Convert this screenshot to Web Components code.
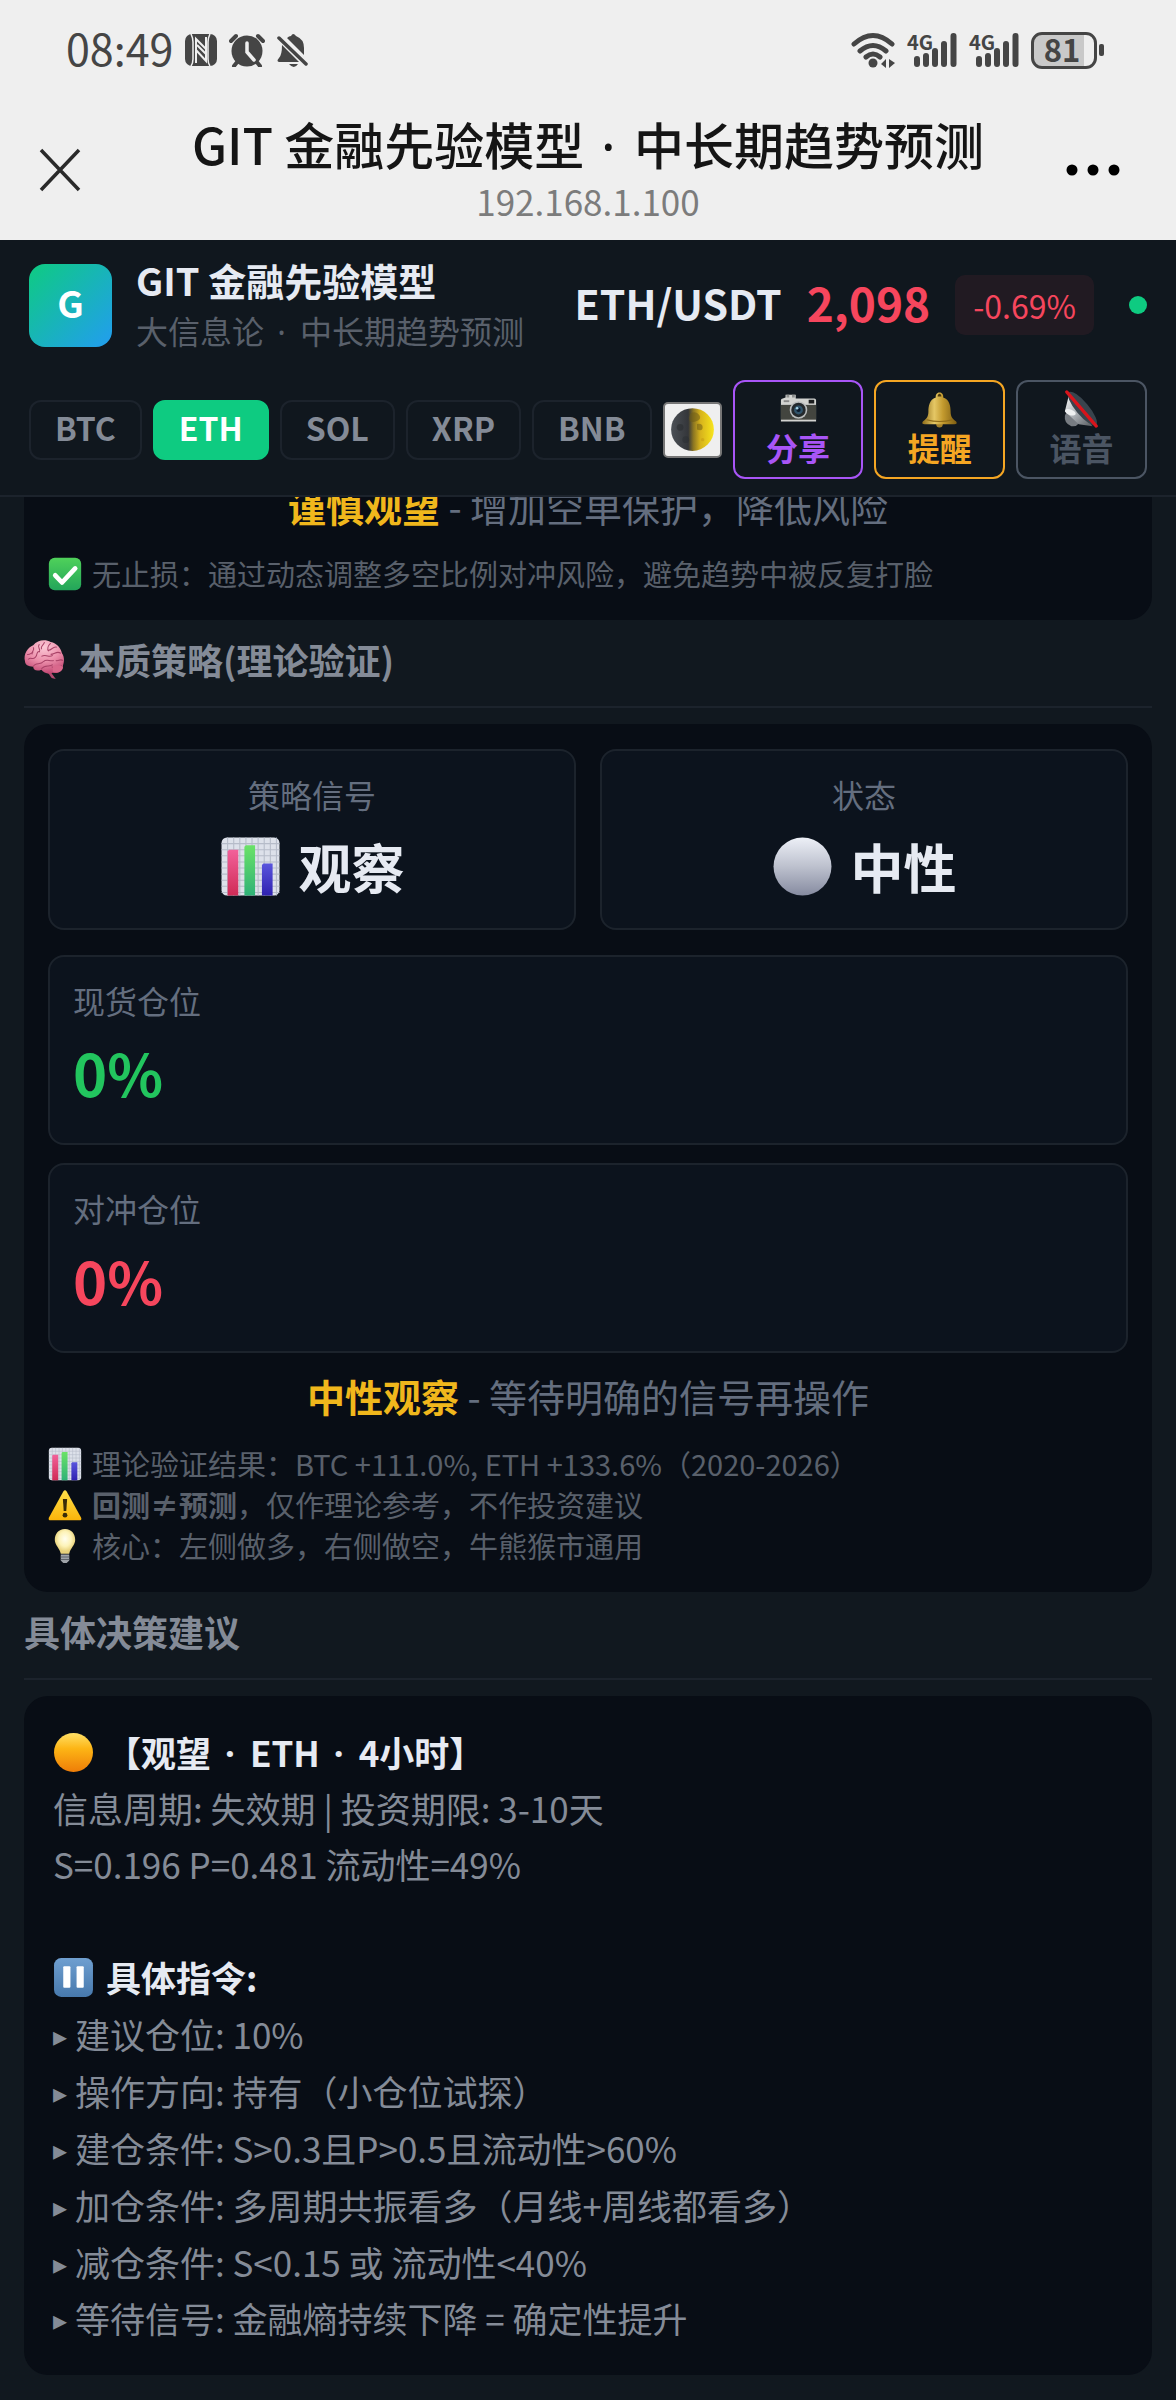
<!DOCTYPE html>
<html lang="zh-CN">
<head>
<meta charset="utf-8">
<meta name="viewport" content="width=device-width, initial-scale=1">
<title>GIT 金融先验模型 · 中长期趋势预测</title>
<style>
  :root {
    --panel: #11181f;
    --card: #080d15;
    --tile: #0c131d;
    --line: #1c232c;
    --text: #e6eaf2;
    --muted: #848b97;
    --dim: #59606b;
    --slate: #646e7f;
    --green: #0ecb81;
    --red: #f6465d;
    --gold: #f0b71c;
  }
  body {
    margin: 0;
    background: var(--panel);
    color: var(--text);
    font-family: "Noto Sans CJK SC", "Noto Sans", sans-serif;
  }
  main {
    display: block;
    overflow: hidden;
    padding: 0 24px 24px;
  }
  .previous {
    margin-top: -41px;
  }
</style>
</head>
<body>
  <status-bar time="08:49" battery="81"></status-bar>
  <browser-bar>
    GIT 金融先验模型 <mid-dot>·</mid-dot> 中长期趋势预测
    <span slot="host">192.168.1.100</span>
  </browser-bar>

  <app-header>
    <span slot="title">GIT 金融先验模型</span>
    <span slot="subtitle">大信息论 <mid-dot>·</mid-dot> 中长期趋势预测</span>
    <span slot="pair">ETH/USDT</span>
    <span slot="price">2,098</span>
    <span slot="change">-0.69%</span>
    <coin-tab>BTC</coin-tab>
    <coin-tab active>ETH</coin-tab>
    <coin-tab>SOL</coin-tab>
    <coin-tab>XRP</coin-tab>
    <coin-tab>BNB</coin-tab>
    <theme-toggle></theme-toggle>
    <action-button icon="camera" tone="#a855f7">分享</action-button>
    <action-button icon="bell" tone="#f5a623">提醒</action-button>
    <action-button icon="speaker" tone="#4b5563">语音</action-button>
  </app-header>

  <main>
    <dark-card class="previous">
      <summary-line term="谨慎观望">增加空单保护，降低风险</summary-line>
      <note-line icon="check">无止损：通过动态调整多空比例对冲风险，避免趋势中被反复打脸</note-line>
    </dark-card>

    <section-heading icon="brain">本质策略(理论验证)</section-heading>

    <dark-card>
      <signal-grid>
        <signal-tile label="策略信号" icon="chart">观察</signal-tile>
        <signal-tile label="状态" icon="silver">中性</signal-tile>
      </signal-grid>
      <position-tile label="现货仓位" tone="#22c55e">0%</position-tile>
      <position-tile label="对冲仓位" tone="#f6465d">0%</position-tile>
      <summary-line term="中性观察">等待明确的信号再操作</summary-line>
      <note-line icon="chart">理论验证结果：BTC +111.0%, ETH +133.6%（2020-2026）</note-line>
      <note-line icon="warning"><b>回测≠预测</b>，仅作理论参考，不作投资建议</note-line>
      <note-line icon="bulb">核心：左侧做多，右侧做空，牛熊猴市通用</note-line>
    </dark-card>

    <section-heading>具体决策建议</section-heading>

    <advice-card></advice-card>
  </main>

<script>
const ICONS = {
  check: `
    <defs><linearGradient id="a" x2="0" y2="1"><stop stop-color="#4fd15a"/><stop offset="1" stop-color="#23a55a"/></linearGradient></defs>
    <rect x="1" y="1" width="38" height="38" rx="7" fill="url(#a)"/>
    <path d="M8.500 21.500l8 8.500L32 13.500" fill="none" stroke="#fff" stroke-width="5.500" stroke-linecap="round" stroke-linejoin="round"/>`,
  brain: `
    <defs><radialGradient id="a" cx=".5" cy=".2" r=".85"><stop stop-color="#fbc9d6"/><stop offset=".5" stop-color="#ec8fab"/><stop offset="1" stop-color="#bd3f6c"/></radialGradient></defs>
    <path d="M25 31l6 8-4-1-5-7z" fill="#b54a70"/>
    <path d="M1 22C-1 14 4 8 9 6c4-5 12-6 17-3 6 1 10 6 11 11 3 4 2 9 1 12 0 5-4 8-10 7-4 2-9 0-11-3-5 2-8 0-8-3-5 0-8-2-8-5z" fill="url(#a)"/>
    <path d="M4 20c3-3 4 1 7-2s0-5 4-6M9 8c2 3-2 4-1 7M15 5c-3 4 2 4 0 8M20 3c-1 4-4 3-3 7M26 4c-3 3-4 5-2 8M32 8c-4-1-5 3-8 3M36 14c-4-3-6 1-10 1M17 17c5-3 7 2 11-1M9 27c2-5 7-1 10-5 3-3 6 0 10-1M17 29c4-5 8-1 11-4M38 21c-3-2-4 1-7 0M27 27c3 3 7 1 10-1M3 15c3 1 4-2 6-2" fill="none" stroke="#a94368" stroke-width="1"/>
    <path d="M28 27c3-2 7-1 10 0 0 4-4 7-10 5z" fill="#d9688c"/>`,
  chart: `
    <defs>
      <linearGradient id="r" x2="0" y2="1"><stop stop-color="#f2619a"/><stop offset="1" stop-color="#d02b56"/></linearGradient>
      <linearGradient id="g" x2="0" y2="1"><stop stop-color="#6be267"/><stop offset="1" stop-color="#2fb277"/></linearGradient>
      <linearGradient id="b" x2="0" y2="1"><stop stop-color="#5a55dd"/><stop offset="1" stop-color="#2f22b0"/></linearGradient>
    </defs>
    <rect x="1" y="1" width="38" height="38" rx="3.500" fill="#dde1ea"/>
    <path d="M5 1v38M9 1v38M13 1v38M17 1v38M21 1v38M25 1v38M29 1v38M33 1v38M37 1v38M1 5h38M1 9h38M1 13h38M1 17h38M1 21h38M1 25h38M1 29h38M1 33h38M1 37h38" stroke="#b6bcc9" stroke-width=".7"/>
    <path d="M5 39V10l1-1h6v30z" fill="url(#r)"/>
    <path d="M16 39V7l1-1h6v33z" fill="url(#g)"/>
    <path d="M27.500 39V19l1-1h6v21z" fill="url(#b)"/>`,
  silver: `
    <defs><linearGradient id="a" x2="0" y2="1"><stop stop-color="#edf0f7"/><stop offset=".5" stop-color="#bdc1ce"/><stop offset="1" stop-color="#868ba0"/></linearGradient></defs>
    <circle cx="20" cy="20" r="19" fill="url(#a)"/>`,
  gold: `
    <defs><linearGradient id="a" x2="0" y2="1"><stop stop-color="#ffe066"/><stop offset=".4" stop-color="#fdb515"/><stop offset="1" stop-color="#ee7d08"/></linearGradient></defs>
    <circle cx="20" cy="20" r="19" fill="url(#a)"/>`,
  warning: `
    <defs><linearGradient id="a" x2="0" y2="1"><stop stop-color="#ffe04a"/><stop offset="1" stop-color="#fbb40a"/></linearGradient></defs>
    <path d="M18 4q2-3 4 0l17 31q1 3-2 3H3q-3 0-2-3z" fill="url(#a)"/>
    <path d="M17.500 13h5l-1 14h-3z" fill="#3a2b08"/><circle cx="20" cy="32" r="2.800" fill="#3a2b08"/>`,
  bulb: `
    <defs><radialGradient id="a" cy=".4"><stop stop-color="#fffef0"/><stop offset=".6" stop-color="#fdf3b8"/><stop offset="1" stop-color="#e8d27c"/></radialGradient></defs>
    <path d="M20 0C12 0 8 6 8 13c0 6 6 10 7 16h10c1-6 7-10 7-16C32 6 28 0 20 0z" fill="url(#a)"/>
    <path d="M15 30h10v7l-3 3h-4l-3-3z" fill="#9fa3a8"/><path d="M15 33h10M15 36h10" stroke="#5f646b" stroke-width="1.200"/>`,
  pause: `
    <defs><linearGradient id="a" x2="0" y2="1"><stop stop-color="#6f9fd0"/><stop offset="1" stop-color="#4779ad"/></linearGradient></defs>
    <rect x="1" y="1" width="38" height="38" rx="7" fill="url(#a)"/>
    <rect x="10" y="9" width="7" height="21" rx="1" fill="#fff"/><rect x="23" y="9" width="7" height="21" rx="1" fill="#fff"/>`,
  camera: `
    <path d="M3 8l3-1V4h11v4l20 0q2 0 2 2v23H1V10q0-2 2-2z" fill="#d2d3d0"/>
    <path d="M7 4h3v3H7zM13 4h3v3h-3z" fill="#8d8f8e"/>
    <rect x="1" y="15" width="38" height="16" fill="#43453f"/>
    <rect x="31" y="9.500" width="6" height="4" fill="#1b1d1e"/><path d="M4 11h6" stroke="#888" stroke-width="2"/>
    <circle cx="20" cy="20.500" r="9.500" fill="#b9bcbc"/><circle cx="20" cy="20.500" r="7.800" fill="#24292c"/>
    <circle cx="20" cy="20.500" r="4.800" fill="#31546b"/><circle cx="20" cy="20.500" r="2.300" fill="#0b1a2c"/><circle cx="18.500" cy="18.700" r="1.400" fill="#a7d3e6"/>`,
  bell: `
    <defs><linearGradient id="a"><stop stop-color="#8e6c18"/><stop offset=".35" stop-color="#e5c765"/><stop offset=".6" stop-color="#c39a2e"/><stop offset="1" stop-color="#7c5c12"/></linearGradient></defs>
    <circle cx="20" cy="36" r="3.500" fill="#a6822a"/>
    <path d="M16 7c-1-7 9-7 8 0 7 2 8 10 8 15 0 6 2 8 6 11q2 3-2 3H4q-4 0-2-3c4-3 6-5 6-11 0-5 1-13 8-15z" fill="url(#a)"/>
    <path d="M6 31q14 4 28 0" fill="none" stroke="#8d6a18" stroke-width="1.200"/>
    <path d="M18 6c0-4 4-4 4 0z" fill="#4e3b0d"/>`,
  speaker: `
    <defs><linearGradient id="a" x2="1" y2="1"><stop stop-color="#f5f6f7"/><stop offset=".5" stop-color="#a9aeb3"/><stop offset="1" stop-color="#55595e"/></linearGradient></defs>
    <path d="M2 27q1-4 5-5l7 3 3 10q-3 4-8 3-8-3-7-11z" fill="#777c82"/>
    <path d="M2 22L6 6l26 32-15-2z" fill="url(#a)"/>
    <ellipse cx="8" cy="23" rx="6" ry="3" fill="#eef0f1" transform="rotate(20 8 23)"/>
    <ellipse cx="21" cy="19" rx="23" ry="7" fill="#39444d" transform="rotate(50 21 19)"/>
    <path d="M4 1L36 38" stroke="#d9141b" stroke-width="3.500" stroke-linecap="round"/>`,
  moon: `
    <defs><linearGradient id="a"><stop stop-color="#4b5056"/><stop offset=".4" stop-color="#34363a"/><stop offset=".52" stop-color="#8b7522"/><stop offset=".68" stop-color="#d6b21c"/><stop offset="1" stop-color="#f8e51c"/></linearGradient></defs>
    <circle cx="20" cy="20" r="19" fill="url(#a)"/>
    <path d="M18 6q5-3 8 1t-4 6-4-7zM24 15q5-1 5 3t-5 2z" fill="#6f5c16" opacity=".55"/>
    <circle cx="9" cy="18" r="3" fill="#2a2d31" opacity=".6"/><circle cx="14" cy="29" r="3" fill="#2a2d31" opacity=".5"/>
    <circle cx="29" cy="29" r="1.500" fill="#c79d14" opacity=".6"/>`
};

function define(name, render) {
  customElements.define(name, class extends HTMLElement {
    constructor() {
      super();
      this.attachShadow({ mode: 'open' });
    }

    connectedCallback() {
      this.shadowRoot.innerHTML = render(this);
    }
  });
}

define('emoji-icon', (el) => `
  <style>
    :host { display: inline-block; flex: none; width: 1em; height: 1em; }
    svg { display: block; width: 100%; height: 100%; overflow: visible; }
  </style>
  <svg viewBox="0 0 40 40" aria-hidden="true">${ICONS[el.getAttribute('name')] || ''}</svg>
`);

// The CJK face draws U+00B7 a full em wide, so the separator uses the Latin one.
define('mid-dot', () => `
  <style>
    :host { display: inline; margin: 0 6px; font-family: "Noto Sans", sans-serif; line-height: 1; }
  </style>
  <slot></slot>
`);

define('signal-bars', () => `
  <style>
    :host { display: block; position: relative; width: 51px; height: 36px; }
    span {
      position: absolute;
      left: 0;
      top: 0;
      font-size: 20px;
      line-height: 20px;
      font-weight: 700;
    }
    svg { display: block; width: 100%; height: 100%; }
  </style>
  <span>4G</span>
  <svg viewBox="0 0 51 36" stroke="currentColor" stroke-width="6" stroke-linecap="round" aria-hidden="true">
    <path d="M10 27v5M19 24v8M28 19v13M37 12v20M46.500 4v28"/>
  </svg>
`);

define('status-bar', (el) => `
  <style>
    :host {
      display: flex;
      align-items: center;
      gap: 12px;
      box-sizing: border-box;
      height: 100px;
      padding: 0 72px 0 66px;
      background: #efefef;
      color: #454545;
    }
    .time { padding-bottom: 6px; font-size: 43px; line-height: 60px; }
    svg { display: block; flex: none; }
    .right { display: flex; align-items: center; gap: 11px; margin-left: auto; }
    .battery { display: flex; align-items: center; gap: 2px; }
    .cell {
      box-sizing: border-box;
      width: 66px;
      height: 37px;
      border: 3px solid currentColor;
      border-radius: 11px;
      background: linear-gradient(90deg, #c9c9c9 84%, #efefef 84%);
      text-align: center;
      font-size: 31px;
      line-height: 27px;
      font-weight: 700;
      padding-right: 4px;
    }
    .nub { width: 5px; height: 12px; border-radius: 2px; background: currentColor; }
  </style>
  <span class="time">${el.getAttribute('time')}</span>
  <svg width="32" height="32" viewBox="0 0 32 32" aria-hidden="true">
    <rect width="32" height="32" rx="7" fill="#454545"/>
    <path d="M6 0q2 4 2 8M8 8v17q0 4-2 7M25 0q-2 4-2 8v17q0 4 2 7" fill="none" stroke="#efefef" stroke-width="1.500"/>
    <path d="M11 29V5l10 10M21 3v24L11 16M12 11l9 9" fill="none" stroke="#efefef" stroke-width="2"/>
  </svg>
  <svg width="36" height="34" viewBox="0 0 36 34" aria-hidden="true">
    <path d="M2 8l5-5M34 8l-5-5M9 28l-4 5M27 28l4 5" stroke="#454545" stroke-width="4" stroke-linecap="round"/>
    <circle cx="18" cy="18" r="15.500" fill="#454545"/>
    <path d="M18 10v9l7 8" fill="none" stroke="#efefef" stroke-width="3.500" stroke-linecap="round"/>
  </svg>
  <svg width="32" height="34" viewBox="0 0 32 34" aria-hidden="true">
    <path d="M5 12l17 17H2q-3-1 0-4 3-3 3-13zM10 5q2-2 4-2 2-4 5 0 8 3 8 12v7zM12 31h9q-4 6-9 0z" fill="#454545"/>
    <path d="M2 5l27 26" stroke="#454545" stroke-width="3.500" stroke-linecap="round"/>
  </svg>
  <div class="right">
    <svg width="45" height="36" viewBox="0 0 45 36" fill="none" stroke="#454545" stroke-width="5" stroke-linecap="round" aria-hidden="true">
      <path d="M3 12Q22-5 41 12M9 19q13-11 26 0M15 25q7-6 14 0"/>
      <circle cx="22" cy="31" r="4.500" fill="#454545" stroke="none"/>
      <path d="M35 27v9l-5-4zM38 27l6 4-6 5z" fill="#454545" stroke="none"/>
    </svg>
    <signal-bars></signal-bars>
    <signal-bars></signal-bars>
    <div class="battery"><div class="cell">${el.getAttribute('battery')}</div><div class="nub"></div></div>
  </div>
`);

define('browser-bar', () => `
  <style>
    :host {
      display: grid;
      grid-template-columns: 166px 1fr 166px;
      align-items: center;
      height: 140px;
      background: #efefef;
      color: #151515;
      text-align: center;
    }
    h1 { margin: 0; font-size: 50px; line-height: 68px; font-weight: 500; white-space: nowrap; }
    p { margin: 0; font-size: 35px; line-height: 48px; color: #7c7c7c; }
    .titles { padding-bottom: 6px; }
    button {
      width: 100%;
      height: 100px;
      padding: 0;
      border: 0;
      background: none;
      color: inherit;
    }
    .close { width: 120px; }
    svg { display: block; margin: 0 auto; }
  </style>
  <button type="button" class="close" aria-label="关闭">
    <svg width="44" height="44" viewBox="0 0 44 44" stroke="#2a2a2a" stroke-width="3.500"><path d="M3 2l38 40M41 2L3 42"/></svg>
  </button>
  <div class="titles">
    <h1><slot></slot></h1>
    <p><slot name="host"></slot></p>
  </div>
  <button type="button" aria-label="更多">
    <svg width="56" height="12" viewBox="0 0 56 12"><circle cx="7" cy="6" r="5.500"/><circle cx="28" cy="6" r="5.500"/><circle cx="49" cy="6" r="5.500"/></svg>
  </button>
`);

define('app-header', () => `
  <style>
    :host {
      display: block;
      position: relative;
      z-index: 1;
      padding: 14px 29px 16px;
      border-bottom: 2px solid var(--line);
      background: #10171e;
    }
    .brand, .quote, .tabs { display: flex; align-items: center; }
    .brand { gap: 24px; margin-bottom: 24px; }
    .logo {
      flex: none;
      width: 83px;
      height: 83px;
      border-radius: 16px;
      background: linear-gradient(135deg, #0ecb81, #229df0);
      color: #fff;
      font-size: 37px;
      font-weight: 700;
      line-height: 77px;
      text-align: center;
    }
    .title, .subtitle { line-height: 51px; white-space: nowrap; }
    .title { font-size: 38px; font-weight: 700; }
    .subtitle { font-size: 32px; color: var(--dim); }
    .quote { gap: 25px; margin-left: auto; white-space: nowrap; }
    .pair, .price { padding-bottom: 7px; font-weight: 700; }
    .pair { font-size: 41px; }
    .price { font-size: 46px; color: var(--red); }
    .change {
      padding: 0 18px;
      border-radius: 10px;
      background: rgba(246, 70, 93, .08);
      color: var(--red);
      font-size: 32px;
      line-height: 60px;
    }
    .dot { width: 18px; height: 18px; margin-left: 10px; border-radius: 50%; background: var(--green); }
    .tabs { gap: 11px; }
  </style>
  <div class="brand">
    <div class="logo">G</div>
    <div>
      <div class="title"><slot name="title"></slot></div>
      <div class="subtitle"><slot name="subtitle"></slot></div>
    </div>
    <div class="quote">
      <div class="pair"><slot name="pair"></slot></div>
      <div class="price"><slot name="price"></slot></div>
      <div class="change"><slot name="change"></slot></div>
      <div class="dot"></div>
    </div>
  </div>
  <nav class="tabs"><slot></slot></nav>
`);

define('coin-tab', () => `
  <style>
    :host { display: block; flex: none; }
    button {
      display: block;
      box-sizing: border-box;
      height: 60px;
      padding: 0 24px 5px;
      border: 2px solid var(--line);
      border-radius: 12px;
      background: none;
      color: var(--muted);
      font: inherit;
      font-size: 32px;
      font-weight: 600;
      line-height: 50px;
    }
    :host([active]) button {
      border-color: var(--green);
      background: var(--green);
      color: #fff;
    }
  </style>
  <button type="button"><slot></slot></button>
`);

define('theme-toggle', () => `
  <style>
    :host { display: block; flex: none; }
    button {
      display: flex;
      align-items: center;
      justify-content: center;
      box-sizing: border-box;
      width: 59px;
      height: 56px;
      padding: 0;
      border: 2px solid #767676;
      border-radius: 5px;
      background: #efefef;
      font-size: 45px;
    }
  </style>
  <button type="button" aria-label="切换主题"><emoji-icon name="moon"></emoji-icon></button>
`);

define('action-button', (el) => `
  <style>
    :host { display: block; flex: 1 1 0; }
    button {
      display: flex;
      flex-direction: column;
      align-items: center;
      box-sizing: border-box;
      width: 100%;
      height: 99px;
      padding: 9px 0 0;
      border: 2px solid ${el.getAttribute('tone')};
      border-radius: 12px;
      background: none;
      color: ${el.getAttribute('tone')};
      font: inherit;
      font-size: 32px;
      font-weight: 600;
      line-height: 38px;
      white-space: nowrap;
    }
    emoji-icon { font-size: 37px; }
  </style>
  <button type="button"><emoji-icon name="${el.getAttribute('icon')}"></emoji-icon><span><slot></slot></span></button>
`);

define('dark-card', () => `
  <style>
    :host {
      display: block;
      padding: 25px 24px 26px;
      border-radius: 24px;
      background: var(--card);
    }
  </style>
  <slot></slot>
`);

define('summary-line', (el) => `
  <style>
    :host {
      display: block;
      margin-bottom: 22px;
      color: var(--slate);
      font-size: 38px;
      line-height: 50px;
      text-align: center;
    }
    b { color: var(--gold); }
  </style>
  <b>${el.getAttribute('term')}</b> - <slot></slot>
`);

define('note-line', (el) => `
  <style>
    :host {
      display: flex;
      align-items: center;
      gap: 10px;
      color: var(--dim);
      font-size: 29px;
      line-height: 41px;
    }
    emoji-icon { font-size: 34px; }
  </style>
  <emoji-icon name="${el.getAttribute('icon')}"></emoji-icon><span><slot></slot></span>
`);

define('section-heading', (el) => `
  <style>
    :host { display: block; margin-bottom: 16px; border-bottom: 2px solid var(--line); }
    h2 {
      display: flex;
      align-items: center;
      gap: 14px;
      margin: 0;
      padding: 14px 0 21px;
      color: var(--muted);
      font-size: 36px;
      font-weight: 600;
      line-height: 51px;
    }
    emoji-icon { font-size: 41px; }
  </style>
  <h2>${el.hasAttribute('icon') ? `<emoji-icon name="${el.getAttribute('icon')}"></emoji-icon>` : ''}<span><slot></slot></span></h2>
`);

define('signal-grid', () => `
  <style>
    :host { display: grid; grid-template-columns: 1fr 1fr; gap: 24px; margin-bottom: 25px; }
  </style>
  <slot></slot>
`);

define('signal-tile', (el) => `
  <style>
    :host {
      display: block;
      padding: 20px 24px 23px;
      border: 2px solid var(--line);
      border-radius: 16px;
      background: var(--tile);
      text-align: center;
    }
    .label { color: var(--slate); font-size: 32px; line-height: 46px; }
    .value {
      display: flex;
      align-items: center;
      justify-content: center;
      gap: 18px;
      margin-top: 10px;
      font-size: 53px;
      font-weight: 700;
      line-height: 78px;
    }
    emoji-icon { font-size: 61px; }
  </style>
  <div class="label">${el.getAttribute('label')}</div>
  <div class="value"><emoji-icon name="${el.getAttribute('icon')}"></emoji-icon><span><slot></slot></span></div>
`);

define('position-tile', (el) => `
  <style>
    :host {
      display: block;
      margin-bottom: 18px;
      padding: 20px 23px 27px;
      border: 2px solid var(--line);
      border-radius: 16px;
      background: var(--tile);
    }
    .label { color: var(--slate); font-size: 32px; line-height: 46px; }
    .value {
      margin-top: 5px;
      color: ${el.getAttribute('tone')};
      font-size: 58px;
      font-weight: 700;
      line-height: 88px;
    }
  </style>
  <div class="label">${el.getAttribute('label')}</div>
  <div class="value"><slot></slot></div>
`);

const ADVICE = [
  '建议仓位: 10%',
  '操作方向: 持有（小仓位试探）',
  '建仓条件: S&gt;0.3且P&gt;0.5且流动性&gt;60%',
  '加仓条件: 多周期共振看多（月线+周线都看多）',
  '减仓条件: S&lt;0.15 或 流动性&lt;40%',
  '等待信号: 金融熵持续下降 = 确定性提升'
];

define('advice-card', () => `
  <style>
    :host {
      display: block;
      padding: 28px 29px 30px;
      border-radius: 24px;
      background: var(--card);
      color: var(--muted);
      font-size: 35px;
      line-height: 56px;
    }
    h3 {
      display: flex;
      align-items: center;
      gap: 12px;
      margin: 0;
      color: var(--text);
      font-size: 35px;
      font-weight: 700;
    }
    emoji-icon { font-size: 41px; }
    p { margin: 0; }
    .orders { margin-top: 57px; }
    ul { margin: 0; padding: 0; list-style: none; }
    li { line-height: 57px; }
    li:last-child { line-height: 55px; }
    i { font: 28px/1 "DejaVu Sans", sans-serif; vertical-align: 3px; }
  </style>
  <h3><emoji-icon name="gold"></emoji-icon><span>【观望 <mid-dot>·</mid-dot> ETH <mid-dot>·</mid-dot> 4小时】</span></h3>
  <p>信息周期: 失效期 | 投资期限: 3-10天</p>
  <p>S=0.196 P=0.481 流动性=49%</p>
  <h3 class="orders"><emoji-icon name="pause"></emoji-icon><span>具体指令:</span></h3>
  <ul>${ADVICE.map((line) => `<li><i>▸</i> ${line}</li>`).join('')}</ul>
`);
</script>
</body>
</html>
